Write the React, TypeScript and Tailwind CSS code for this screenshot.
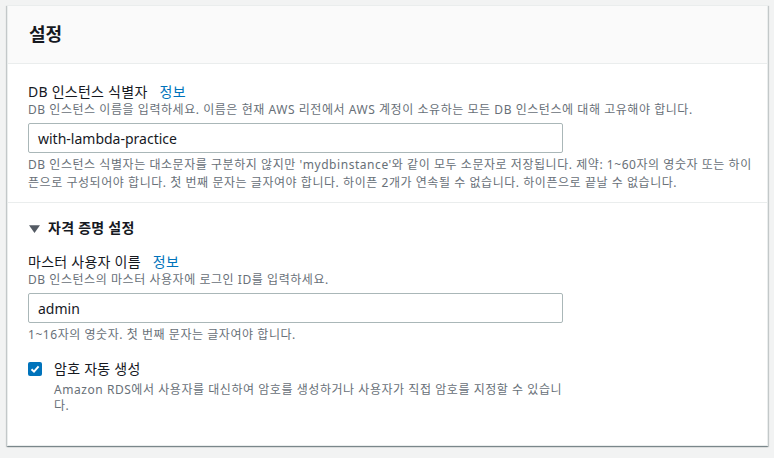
import React from "react";

const font = {
  fontFamily: '"Noto Sans", "Noto Sans CJK KR", sans-serif',
};

const Label: React.FC<{ text: string }> = ({ text }) => (
  <div className="flex items-center gap-x-[12px] text-[14px] leading-[20px] tracking-[0.25px] text-[#16191f]">
    <span>{text}</span>
    <span className="text-[#0073bb]">정보</span>
  </div>
);

export default function App() {
  return (
    <div className="min-h-[458px] w-[774px] bg-[#f2f3f3] pl-[7px] pr-[6px] pt-[5px]" style={font}>
      <div className="border border-[#eaeded] bg-white shadow-[0_1px_1px_0_rgba(0,28,36,0.3),1px_1px_1px_0_rgba(0,28,36,0.15),-1px_1px_1px_0_rgba(0,28,36,0.15)]">
        <div className="flex h-[58px] items-center border-b border-[#eaeded] bg-[#fafafa] px-[21px]">
          <h2 className="text-[18px] font-bold text-[#16191f]">설정</h2>
        </div>

        <div className="pl-[20px] pr-[10px] pt-[18px] pb-[10px]">
          <Label text="DB 인스턴스 식별자" />
          <p className="mt-[-1px] text-[12px] leading-[18px] tracking-[0.55px] text-[#687078]">
            DB 인스턴스 이름을 입력하세요. 이름은 현재 AWS 리전에서 AWS 계정이 소유하는 모든 DB 인스턴스에 대해 고유해야 합니다.
          </p>
          <div className="mt-[4px] flex h-[30px] w-[535px] items-center rounded-[2px] border border-[#aab7b8] px-[9px] text-[14px] text-[#16191f]">
            with-lambda-practice
          </div>
          <p className="mt-[3px] max-w-[727px] text-[12px] leading-[18px] tracking-[0.55px] text-[#687078]">
            DB 인스턴스 식별자는 대소문자를 구분하지 않지만 'mydbinstance'와 같이 모두 소문자로 저장됩니다. 제약: 1~60자의 영숫자 또는 하이픈으로 구성되어야 합니다. 첫 번째 문자는 글자여야 합니다. 하이픈 2개가 연속될 수 없습니다. 하이픈으로 끝날 수 없습니다.
          </p>
        </div>

        <div className="border-t border-[#eaeded] px-[20px] pt-[15px] pb-[31px]">
          <div className="flex items-center gap-x-[8px] text-[14px] font-bold leading-[20px] tracking-[0.25px] text-[#16191f]">
            <svg width="11" height="11" viewBox="0 0 10 10" className="ml-[1px]">
              <path d="M0 2 L10 2 L5 9 Z" fill="#545b64" />
            </svg>
            <span>자격 증명 설정</span>
          </div>

          <div className="mt-[14px]">
            <Label text="마스터 사용자 이름" />
            <p className="mt-[-1px] text-[12px] leading-[18px] tracking-[0.55px] text-[#687078]">
              DB 인스턴스의 마스터 사용자에 로그인 ID를 입력하세요.
            </p>
            <div className="mt-[4px] flex h-[30px] w-[535px] items-center rounded-[2px] border border-[#aab7b8] px-[9px] text-[14px] text-[#16191f]">
              admin
            </div>
            <p className="mt-[3px] text-[12px] leading-[18px] tracking-[0.55px] text-[#687078]">
              1~16자의 영숫자. 첫 번째 문자는 글자여야 합니다.
            </p>
          </div>

          <div className="mt-[15px] flex gap-x-[12px]">
            <div className="mt-[3px] flex h-[14px] w-[14px] shrink-0 items-center justify-center rounded-[2px] bg-[#0073bb]">
              <svg width="10" height="10" viewBox="0 0 10 10">
                <path d="M1.5 5.2 L4 7.6 L8.6 2.4" stroke="white" strokeWidth="2" fill="none" />
              </svg>
            </div>
            <div>
              <div className="text-[14px] leading-[20px] tracking-[0.25px] text-[#16191f]">암호 자동 생성</div>
              <p className="mt-[3px] max-w-[510px] text-[12px] leading-[16px] tracking-[0.55px] text-[#687078]">
                Amazon RDS에서 사용자를 대신하여 암호를 생성하거나 사용자가 직접 암호를 지정할 수 있습니다.
              </p>
            </div>
          </div>
        </div>
      </div>
    </div>
  );
}
